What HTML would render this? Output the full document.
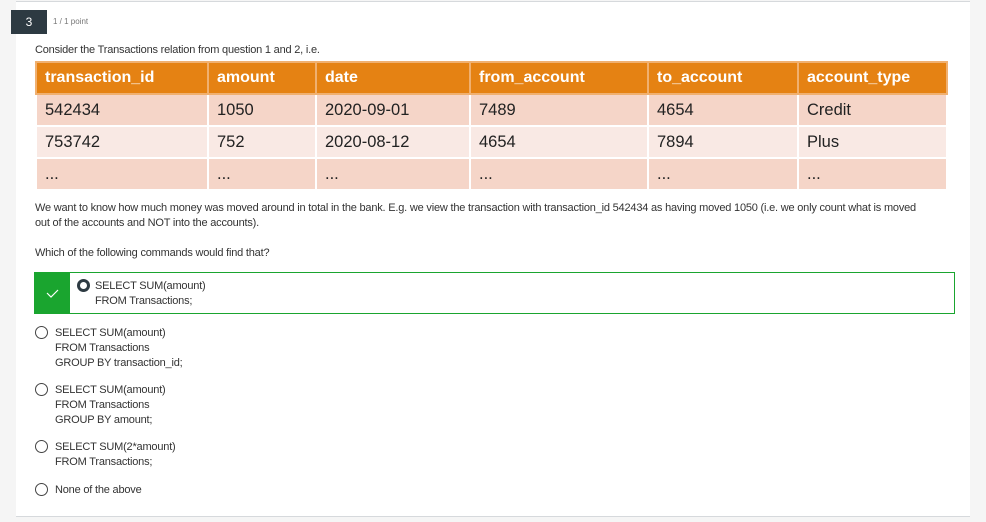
<!DOCTYPE html>
<html><head><style>
body{margin:0;width:986px;height:522px;background:#f5f5f5;position:relative;overflow:hidden;font-family:"Liberation Sans",sans-serif;color:#333}
.card{position:absolute;left:16px;top:1px;width:954px;height:514px;background:#fff;border-top:1px solid #d6d9dc;border-bottom:1px solid #d6d9dc}
.badge{position:absolute;left:11px;top:10px;width:36px;height:24px;background:#2d3a42;color:#fff;font-size:12px;text-align:center;line-height:24px}
.pt{position:absolute;left:53px;top:17px;font-size:8px;color:#777}
.t{position:absolute;font-size:11px;line-height:15px;color:#333;letter-spacing:-0.2px}
table{position:absolute;left:35px;top:61px;border-collapse:collapse;font-size:16.5px;font-family:"Liberation Sans",sans-serif}
td{border:2px solid #fff;padding:0 8px;height:30px;color:#222}
tr.h td{background:#e58213;color:#fff;font-weight:bold;border-color:#f0b070;font-size:16px}
tr.a td{background:#f5d5c8}
tr.b td{background:#f9e9e4}
.r{position:absolute;width:11px;height:11px;border:1.5px solid #444;border-radius:50%;background:#fff}
.sel{position:absolute;left:34px;top:272px;width:919px;height:40px;border:1px solid #1aa52f}
.chk{position:absolute;left:0;top:0;width:35px;height:40px;background:#1aa52f}
</style></head><body>
<div class="card"></div>
<div class="badge">3</div>
<div class="pt">1 / 1 point</div>
<div class="t" style="left:35px;top:43px">Consider the Transactions relation from question 1 and 2, i.e.</div>
<table>
<tr class="h"><td style="width:154px">transaction_id</td><td style="width:90px">amount</td><td style="width:136px">date</td><td style="width:160px">from_account</td><td style="width:132px">to_account</td><td style="width:131px">account_type</td></tr>
<tr class="a"><td>542434</td><td>1050</td><td>2020-09-01</td><td>7489</td><td>4654</td><td>Credit</td></tr>
<tr class="b"><td>753742</td><td>752</td><td>2020-08-12</td><td>4654</td><td>7894</td><td>Plus</td></tr>
<tr class="a"><td>...</td><td>...</td><td>...</td><td>...</td><td>...</td><td>...</td></tr>
</table>
<div class="t" style="left:35px;top:201px;width:890px">We want to know how much money was moved around in total in the bank. E.g. we view the transaction with transaction_id 542434 as having moved 1050 (i.e. we only count what is moved out of the accounts and NOT into the accounts).</div>
<div class="t" style="left:35px;top:246px">Which of the following commands would find that?</div>
<div class="sel"><div class="chk"><svg width="35" height="40"><path d="M12 20l4 4 7-7" stroke="#fff" stroke-width="1.2" fill="none"/></svg></div></div>
<div class="r" style="left:77px;top:279px;border:3.5px solid #2d3a42;width:7px;height:7px"></div>
<div class="t" style="left:95px;top:279px">SELECT SUM(amount)<br>FROM Transactions;</div>
<div class="r" style="left:35px;top:326px"></div>
<div class="t" style="left:55px;top:326px">SELECT SUM(amount)<br>FROM Transactions<br>GROUP BY transaction_id;</div>
<div class="r" style="left:35px;top:383px"></div>
<div class="t" style="left:55px;top:383px">SELECT SUM(amount)<br>FROM Transactions<br>GROUP BY amount;</div>
<div class="r" style="left:35px;top:440px"></div>
<div class="t" style="left:55px;top:440px">SELECT SUM(2*amount)<br>FROM Transactions;</div>
<div class="r" style="left:35px;top:483px"></div>
<div class="t" style="left:55px;top:483px">None of the above</div>
</body></html>
